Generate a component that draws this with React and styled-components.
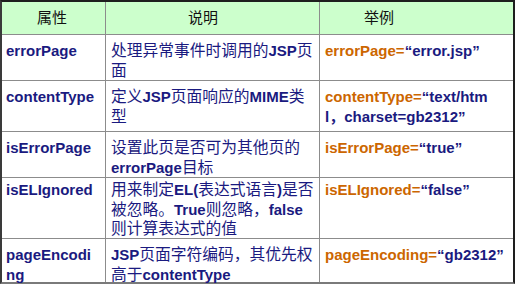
import React from 'react';
import styled, { createGlobalStyle } from 'styled-components';

const GlobalStyle = createGlobalStyle`
  html, body {
    margin: 0;
    padding: 0;
    background: #ffffff;
  }
`;

const Grid = styled.div`
  box-sizing: border-box;
  width: 515px;
  display: grid;
  grid-template-columns: 103px 213px 193px;
  grid-template-rows: 32px 45px 50px 45px 60px 43px;
  gap: 1px;
  background: #8c8c8c;
  border-top: 2px solid #1e1e1e;
  border-left: 2px solid #3a3a3a;
  border-right: 2px solid #1e1e1e;
  border-bottom: 2px solid #7a7a7a;
  font-family: "Liberation Sans", Arial, "Noto Sans CJK SC", sans-serif;
`;

const HeadCell = styled.div`
  background: #ccffcc;
  color: #111;
  font-family: "Noto Sans CJK SC", sans-serif;
  font-size: 15px;
  line-height: 20px;
  padding: 5px 0 0 ${(p) => p.$indent}px;
`;

const Cell = styled.div`
  background: #ffffff;
  color: #1a1a80;
  font-size: ${(p) => (p.$desc ? '15.75px' : '15px')};
  font-weight: ${(p) => (p.$desc ? 400 : 700)};
  line-height: 20px;
  padding: ${(p) => (p.$tight ? 2 : 6)}px 0 0 ${(p) => (p.$first ? 4 : 5)}px;
  white-space: nowrap;
`;

const Line = styled.div`
  height: ${(p) => (p.$tight ? 19.5 : 20)}px;
`;

const B = styled.span`
  font-size: 15px;
  font-weight: 700;
`;

const Key = styled.span`
  color: #cc6600;
`;

const rows = [
  {
    name: ['errorPage'],
    desc: [
      <>处理异常事件时调用的<B>JSP</B>页</>,
      <>面</>,
    ],
    example: [<><Key>errorPage=</Key>“error.jsp”</>],
  },
  {
    name: ['contentType'],
    desc: [
      <>定义<B>JSP</B>页面响应的<B>MIME</B>类</>,
      <>型</>,
    ],
    example: [
      <><Key>contentType=</Key>“text/htm</>,
      <>l，charset=gb2312”</>,
    ],
  },
  {
    name: ['isErrorPage'],
    desc: [
      <>设置此页是否可为其他页的</>,
      <><B>errorPage</B>目标</>,
    ],
    example: [<><Key>isErrorPage=</Key>“true”</>],
  },
  {
    name: ['isELIgnored'],
    tight: true,
    desc: [
      <>用来制定<B>EL(</B>表达式语言<B>)</B>是否</>,
      <>被忽略。<B>True</B>则忽略，<B>false</B></>,
      <>则计算表达式的值</>,
    ],
    example: [<><Key>isELIgnored=</Key>“false”</>],
  },
  {
    name: ['pageEncodi', 'ng'],
    desc: [
      <><B>JSP</B>页面字符编码，其优先权</>,
      <>高于<B>contentType</B></>,
    ],
    example: [<><Key>pageEncoding=</Key>“gb2312”</>],
  },
];

function App() {
  return (
    <>
      <GlobalStyle />
      <Grid>
        <HeadCell $indent={35}>属性</HeadCell>
        <HeadCell $indent={82}>说明</HeadCell>
        <HeadCell $indent={44}>举例</HeadCell>
        {rows.map((row) => (
          <React.Fragment key={row.name.join('')}>
            <Cell $first $tight={row.tight}>
              {row.name.map((l, i) => <Line key={i} $tight={row.tight}>{l}</Line>)}
            </Cell>
            <Cell $desc $tight={row.tight}>
              {row.desc.map((l, i) => <Line key={i} $tight={row.tight}>{l}</Line>)}
            </Cell>
            <Cell $tight={row.tight}>
              {row.example.map((l, i) => <Line key={i} $tight={row.tight}>{l}</Line>)}
            </Cell>
          </React.Fragment>
        ))}
      </Grid>
    </>
  );
}

export default App;
